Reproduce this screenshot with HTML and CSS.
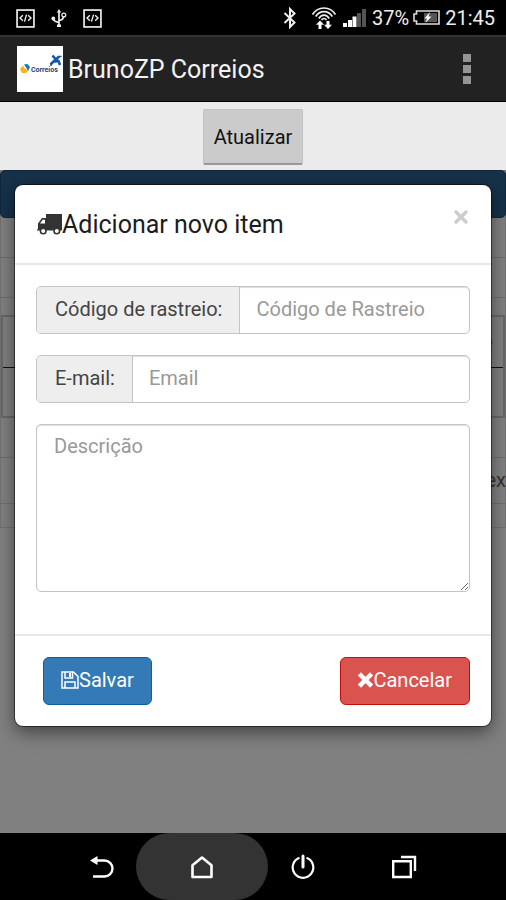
FILE: index.html
```html
<!DOCTYPE html>
<html lang="pt-BR">
<head>
<meta charset="utf-8">
<meta name="viewport" content="width=device-width, initial-scale=1">
<title>BrunoZP Correios</title>
<link rel="stylesheet" href="styles.css">
</head>
<body>
<div class="status-bar">
  <div class="status-left">
    <svg width="19" height="19" viewBox="0 0 18 18" fill="none" stroke="#eee"><rect x="1" y="1" width="16" height="16" stroke-width="1.600"/><path d="M6.500 6 3.800 8.600l2.700 2.600M11.500 6l2.700 2.600-2.700 2.600M10 5.300 8 12" stroke-width="1.300"/></svg>
    <svg width="16" height="18" viewBox="0 0 16 18" fill="none" stroke="#eee" stroke-width="1.700"><path d="M8 2v14M2.500 10c0 2.500 3 3 5.500 3.500M8 11.500c3-.5 4.500-1.500 4.500-4"/><path d="M8 0 5.800 3.500h4.400zM6 15.500h4V18H6z" fill="#eee" stroke="none"/><circle cx="2.300" cy="9.500" r="1.900" fill="#eee" stroke="none"/><circle cx="12.800" cy="6" r="1.900" stroke-width="1.300"/></svg>
    <svg width="19" height="19" viewBox="0 0 18 18" fill="none" stroke="#eee"><rect x="1" y="1" width="16" height="16" stroke-width="1.600"/><path d="M6.500 6 3.800 8.600l2.700 2.600M11.500 6l2.700 2.600-2.700 2.600M10 5.300 8 12" stroke-width="1.300"/></svg>
  </div>
  <div class="status-right">
    <svg class="bluetooth" width="14" height="22" viewBox="0 0 14 22" fill="none" stroke="#eee" stroke-width="2"><path d="m1.500 6 10 9.500L7 20V2l4.500 4.500-10 9.500"/></svg>
    <svg class="wifi" width="26" height="24" viewBox="0 0 26 24" fill="none" stroke="#eee" stroke-width="1.700"><path d="M1.500 8.500C7-.2 19-.2 24.500 8.500M4.700 10.500c4-6.600 12.600-6.600 16.600 0M7.800 12.500c2.700-4.500 7.700-4.500 10.400 0M10.500 14c1.400-2 3.600-2 5 0"/><path d="m9 14.500-4 4.300h2.500V23h3v-4.200H13zM17 23l-4-4.300h2.500V15h3v3.700H21z" fill="#fff" stroke="none"/></svg>
    <svg class="signal" width="23" height="19" viewBox="0 0 23 19"><path fill="#fff" d="M0 14h4v4H0zM5 11h4v7H5zM9.500 7.500h4V18h-4z"/><path fill="#555" d="M14 4h4v14h-4zM19 0h4v18h-4z"/></svg>
    <span>37%</span>
    <svg class="battery" width="27" height="16" viewBox="0 0 27 16"><path d="M3.500 1H26v13H3.500v-3H1V4h2.500z" fill="none" stroke="#ddd" stroke-width="1.600"/><path d="M11 3h13v9H11z" fill="#555"/><path d="m17 2-5.500 6.500H14L12.500 13l6-6.500h-3z" fill="#fff"/></svg>
    <span>21:45</span>
  </div>
</div>

<header class="action-bar">
  <svg class="app-logo" width="46" height="46" viewBox="0 0 46 46"><rect width="46" height="46" fill="#fff"/><path d="M3 23 6 19.500 8 23l3.500 1L9 27H5z" fill="#f4b21c"/><path d="m7 18.500 3.500-.5 2.500 3-2 4-1.500-3z" fill="#1975bd"/><path d="m35.500 9.500 3 3.500M42 10.500 39.500 13M33.500 18.500 37 15h4.500l1.500 4" fill="none" stroke="#1657a8" stroke-width="2.600"/><circle cx="38.800" cy="14.500" r="2.300" fill="#1657a8"/><path d="M41.500 10.500h3M33 19h2" stroke="#1657a8" stroke-width="1.500"/><text class="logo-text" x="14" y="26">Correios</text></svg>
  <h1 class="app-title">BrunoZP Correios</h1>
  <button class="overflow" type="button" aria-label="Menu"><span></span><span></span><span></span></button>
</header>

<div class="toolbar"><button class="refresh" type="button">Atualizar</button></div>

<main class="content">
  <section class="panel">
    <div class="panel-heading"></div>
    <div class="row"></div>
    <div class="row"></div>
    <div class="box"><div class="box-row">e</div><div class="box-row"></div></div>
    <div class="row"></div>
    <div class="row row-tall">ex</div>
    <div class="row-last"></div>
  </section>

  <form class="modal" role="dialog" aria-labelledby="modal-title">
    <div class="modal-header">
      <svg class="truck" width="25" height="21" viewBox="0 0 25 21"><path d="M9 0h16v16.500H0v-1.200h1V9.500L5 4h4z" fill="#333"/><path d="M3 9.500 5.700 5.700H8v3.800z" fill="#fff"/><circle cx="6.200" cy="17" r="2.800" fill="#fff" stroke="#333" stroke-width="1.600"/><circle cx="19.800" cy="17" r="2.800" fill="#fff" stroke="#333" stroke-width="1.600"/></svg>
      <h2 class="modal-title" id="modal-title">Adicionar novo item</h2>
      <button class="close" type="button" aria-label="Fechar"><svg width="14" height="14" viewBox="0 0 14 14"><path d="m2 2 10 10M12 2 2 12" stroke="#ccc" stroke-width="3.400" stroke-linecap="round"/></svg></button>
    </div>
    <div class="modal-body">
      <div class="field"><label for="codigo">Código de rastreio:</label><input id="codigo" type="text" placeholder="Código de Rastreio"></div>
      <div class="field"><label for="email">E-mail:</label><input id="email" type="email" placeholder="Email"></div>
      <textarea class="description" aria-label="Descrição" placeholder="Descrição"></textarea>
    </div>
    <div class="modal-footer">
      <button class="btn save" type="button"><svg width="18" height="18" viewBox="0 0 18 18" fill="none" stroke="#fff" stroke-width="1.500"><path d="M1 1h11.500L17 5.500V17H1z"/><path d="M4 1v6h7.500V1M4 17v-6h10v6"/><path d="M8 2h2v4H8z" fill="#fff" stroke="none"/></svg>Salvar</button>
      <button class="btn cancel" type="button"><svg width="15" height="16" viewBox="0 0 15 16"><path d="m3 3.500 9 9M12 3.500l-9 9" stroke="#fff" stroke-width="4.500" stroke-linecap="square"/></svg>Cancelar</button>
    </div>
  </form>
</main>

<nav class="nav-bar">
  <button class="nav-key" type="button" aria-label="Voltar"><svg width="26" height="24" viewBox="0 0 26 24" fill="none"><path d="M6 5.500h9.500a8 8 0 0 1 0 16H4" stroke="#fff" stroke-width="2.400"/><path d="M1 5.500 8.500 1v9z" fill="#fff"/></svg></button>
  <button class="nav-key home" type="button" aria-label="Início"><svg width="24" height="24" viewBox="0 0 24 24" fill="none" stroke="#fff" stroke-width="2.600"><path d="m12 2.500 9.500 7.700V22h-19V10.200z" stroke-linejoin="round"/></svg></button>
  <button class="nav-key" type="button" aria-label="Desligar"><svg width="24" height="26" viewBox="0 0 24 26" fill="none" stroke="#fff" stroke-width="2.200"><path d="M8.500 3.800a10.300 10.300 0 1 0 7 0"/><path d="M12 2v11" stroke-width="3" stroke-linecap="round"/></svg></button>
  <button class="nav-key" type="button" aria-label="Recentes"><svg width="26" height="24" viewBox="0 0 26 24" fill="none" stroke="#fff" stroke-width="2.400"><path d="M2.200 6.200h17.600V22H2.200z"/><path d="M10 2h14v14"/></svg></button>
</nav>
</body>
</html>
```

FILE: styles.css
```css
* { box-sizing: border-box; }
body {
  margin: 0;
  min-height: 100vh;
  display: flex;
  flex-direction: column;
  background: #000;
  font-family: Roboto, "Liberation Sans", sans-serif;
  font-size: 20px;
  overflow-x: hidden;
}
button, input, textarea { font: inherit; }
button { cursor: pointer; }
svg { display: block; flex: none; }

.status-bar {
  height: 35px;
  display: flex;
  align-items: center;
  justify-content: space-between;
  padding: 1px 11px 0 16px;
  color: #eee;
}
.status-left { display: flex; gap: 16px; }
.status-right { display: flex; align-items: center; }
.bluetooth { margin-right: 14px; }
.signal { margin: 0 6px; }
.battery { margin: 0 5px 0 4px; }

.action-bar {
  height: 67px;
  display: flex;
  align-items: center;
  gap: 5px;
  padding: 0 31px 0 17px;
  background: #222;
  border-top: 2px solid #333;
  border-bottom: 1px solid #000;
}
.logo-text { font: bold 7px Roboto, sans-serif; fill: #1b4378; }
.app-title { flex: 1; margin: 0; padding-top: 1px; font-size: 25px; font-weight: 400; color: #f2f2f2; }
.overflow {
  display: grid;
  gap: 3px;
  padding: 0 4px;
  border: 0;
  background: none;
}
.overflow span { width: 8px; height: 8px; background: #959595; }

.toolbar {
  height: 68px;
  display: flex;
  justify-content: center;
  align-items: flex-start;
  padding-top: 7px;
  background: #ebebeb;
}
.refresh {
  height: 56px;
  padding: 0 10px;
  border: 1px solid #c2c2c2;
  border-bottom: 2px solid #999;
  border-radius: 2px;
  background: #cbcbcb;
  color: #111;
}

.content { flex: 1; position: relative; background: #808080; }
.panel { border: 1px solid #717171; border-top: 0; color: #333; }
.panel-heading { height: 48px; margin: 0 -1px; background: #16314a; border: 1px solid #10263b; border-radius: 5px; }
.row { height: 40px; border-bottom: 1px solid #6f6f6f; text-align: right; }
.row-tall { height: 46px; line-height: 44px; margin-right: -1px; }
.row-last { height: 23px; }
.box { margin-top: 17px; border: 2px solid #686868; }
.box-row { height: 48px; line-height: 50px; padding-right: 10px; text-align: right; color: #555; }
.box-row:first-child { height: 51px; border-bottom: 1px solid #111; }

.modal {
  position: absolute;
  top: 15px;
  left: 15px;
  right: 15px;
  background: #fff;
  border-radius: 8px;
  box-shadow: 0 0 0 1px rgba(0, 0, 0, .5), 0 6px 18px rgba(0, 0, 0, .5);
}
.modal-header {
  height: 80px;
  display: flex;
  align-items: center;
  padding: 0 22px;
  border-bottom: 2px solid #e8e8e8;
}
.modal-title { flex: 1; margin: 0; font-size: 25px; font-weight: 400; color: #1c1c1c; }
.close { padding: 0 1px 14px; border: 0; background: none; }
.modal-body { display: grid; gap: 21px; padding: 21px 21px 42px; }
.field {
  height: 48px;
  display: flex;
  border: 1px solid #c4c4c4;
  border-radius: 5px;
  overflow: hidden;
  box-shadow: inset 0 1px 1px #ddd;
}
.field label {
  padding: 0 17px 0 18px;
  line-height: 44px;
  background: #eee;
  border-right: 1px solid #c4c4c4;
  color: #444;
}
.field input { flex: 1; min-width: 0; padding: 0 16px 2px; border: 0; background: none; }
.description {
  display: block;
  width: 100%;
  height: 168px;
  padding: 9px 17px;
  border: 1px solid #c4c4c4;
  border-radius: 5px;
  box-shadow: inset 0 1px 1px #ddd;
}
::placeholder { color: #999; opacity: 1; }
.modal-footer {
  display: flex;
  justify-content: space-between;
  padding: 21px 21px 21px 28px;
  border-top: 2px solid #e8e8e8;
}
.btn {
  height: 48px;
  display: flex;
  align-items: center;
  padding: 0 17px 2px;
  border: 1px solid;
  border-radius: 6px;
  color: #fff;
}
.save { background: #337ab7; border-color: #0c609f; }
.cancel { background: #d9534f; border-color: #cc0b0b; }

.nav-bar { height: 67px; display: flex; justify-content: center; background: #000; }
.nav-key {
  flex: 0 1 20%;
  display: grid;
  place-items: center;
  padding: 0;
  border: 0;
  background: none;
}
.home { flex-basis: 132px; margin: 0 -16px; border-radius: 34px; background: #333; }
```
